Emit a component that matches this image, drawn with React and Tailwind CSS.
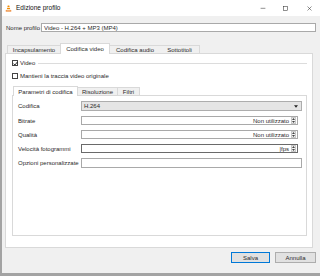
import React from "react";

function VlcIcon() {
  return (
    <svg width="7" height="7" viewBox="0 0 14 14">
      <path d="M5.5 1h3l1 4h-5z" fill="#f48b00" />
      <path d="M4.3 6h5.4l0.8 3.2h-7z" fill="#f48b00" />
      <path d="M1.5 10.5h11v2.5h-11z" fill="#e86a00" />
      <path d="M4.5 5h5l0.2 1h-5.4zM3.5 9.2h7l0.3 1.3h-7.6z" fill="#fff" />
    </svg>
  );
}

function Check({ checked }) {
  return (
    <div className="w-[6px] h-[6px] border border-[#444] bg-white flex items-center justify-center overflow-visible">
      {checked && (
        <svg width="5" height="5" viewBox="0 0 10 10" className="shrink-0">
          <path d="M1 5.2l2.8 2.8 5-6" stroke="#111" strokeWidth="1.8" fill="none" />
        </svg>
      )}
    </div>
  );
}

function Spinner() {
  return (
    <div className="w-[5px] h-[7px] border border-[#c8c8c8] bg-[#f4f4f4] flex flex-col items-center justify-around mr-[1px]">
      <svg width="3" height="2" viewBox="0 0 6 4"><path d="M3 0l3 4H0z" fill="#444" /></svg>
      <svg width="3" height="2" viewBox="0 0 6 4"><path d="M0 0h6L3 4z" fill="#444" /></svg>
    </div>
  );
}

function Row({ label, children, mt = "mt-[5px]" }) {
  return (
    <div className={`flex items-center ${mt}`}>
      <div className="w-[63px] shrink-0">{label}</div>
      {children}
    </div>
  );
}

function SpinField({ value, dark }) {
  return (
    <div className={`w-[217px] h-[9px] bg-white border ${dark ? "border-[#6a6a6a]" : "border-[#a9a9a9]"} flex items-center justify-end`}>
      <span className="mr-[2px]">{value}</span>
      <Spinner />
    </div>
  );
}

export default function App() {
  const outerTabs = ["Incapsulamento", "Codifica video", "Codifica audio", "Sottotitoli"];
  const outerW = ["w-[53px]", "w-[50px]", "w-[50px]", "w-[40px]"];
  const innerTabs = ["Parametri di codifica", "Risoluzione", "Filtri"];
  const innerW = ["w-[65px]", "w-[40px]", "w-[22px]"];

  return (
    <div className="w-[320px] h-[276px] bg-[#f0f0f0] flex flex-col border-l-2 border-b-[3px] border-[#a3a3a3] overflow-hidden text-[6px] leading-none text-[#2a2a2a] font-['Liberation_Sans',Arial,sans-serif]">
      {/* Title bar */}
      <div className="h-[16px] bg-white flex items-center shrink-0">
        <div className="ml-[3px]"><VlcIcon /></div>
        <span className="ml-[4px] text-[6.5px] text-[#111]">Edizione profilo</span>
        <div className="ml-auto flex items-center">
          <svg width="6" height="6" viewBox="0 0 10 10" className="mr-[17px]"><path d="M1 5.5h8" stroke="#333" strokeWidth="0.9" /></svg>
          <svg width="5" height="5" viewBox="0 0 10 10" className="mr-[19px]"><rect x="0.7" y="0.7" width="8.6" height="8.6" stroke="#333" strokeWidth="1.1" fill="none" /></svg>
          <svg width="5" height="5" viewBox="0 0 10 10" className="mr-[8px]"><path d="M1 1l8 8M9 1l-8 8" stroke="#333" strokeWidth="1.1" /></svg>
        </div>
      </div>

      {/* Profile name */}
      <div className="flex items-center mt-[7px] pl-[4px] pr-[4px]">
        <span className="w-[35px] shrink-0">Nome profilo</span>
        <div className="flex-1 h-[9px] bg-white border border-[#a9a9a9] flex items-center pl-[2px]">
          Video - H.264 + MP3 (MP4)
        </div>
      </div>

      {/* Outer tabs */}
      <div className="flex items-end h-[11px] mt-[11px] -mb-px pl-[5px] relative z-10">
        {outerTabs.map((t, i) =>
          i === 1 ? (
            <div key={t} className={`${outerW[i]} h-[11px] bg-white border-x border-t border-[#d9d9d9] flex items-center justify-center pb-[1px]`}>{t}</div>
          ) : (
            <div key={t} className={`${outerW[i]} h-[8px] mb-px bg-[#f0f0f0] border-t border-[#d9d9d9] ${i === 0 ? "border-l" : ""} ${i === 3 ? "border-r" : ""} flex items-center justify-center`}>{t}</div>
          )
        )}
      </div>

      {/* Outer panel */}
      <div className="ml-[3px] w-[308px] h-[195px] bg-white border border-[#d9d9d9] shrink-0 flex flex-col pl-[6px] pr-[5px]">
        <div className="flex items-center mt-[6px]">
          <Check checked />
          <span className="ml-[2px]">Video</span>
          <div className="flex-1 h-px bg-[#dcdcdc] ml-[3px]" />
        </div>
        <div className="flex items-center mt-[7px]">
          <Check />
          <span className="ml-[2px]">Mantieni la traccia video originale</span>
        </div>

        {/* Inner tabs */}
        <div className="flex items-end h-[10px] mt-[7px] -mb-px pl-px relative z-10">
          {innerTabs.map((t, i) =>
            i === 0 ? (
              <div key={t} className={`${innerW[i]} h-[10px] bg-white border-x border-t border-[#d9d9d9] flex items-center justify-center`}>{t}</div>
            ) : (
              <div key={t} className={`${innerW[i]} h-[8px] mb-px bg-[#f0f0f0] border-t border-r border-[#d9d9d9] flex items-center justify-center`}>{t}</div>
            )
          )}
        </div>

        {/* Inner panel */}
        <div className="h-[141px] border border-[#d9d9d9] bg-white pl-[5px] pr-[4px] flex flex-col">
          <Row label="Codifica" mt="mt-[5px]">
            <div className="flex-1 h-[10px] bg-[#e5e5e5] border border-[#adadad] flex items-center pl-[2px]">
              <span>H.264</span>
              <svg width="4" height="3" viewBox="0 0 8 5" className="ml-auto mr-[3px]"><path d="M0 0h8L4 5z" fill="#222" /></svg>
            </div>
          </Row>
          <Row label="Bitrate">
            <SpinField value="Non utilizzato" />
          </Row>
          <Row label="Qualità">
            <SpinField value="Non utilizzato" />
          </Row>
          <Row label="Velocità fotogrammi">
            <SpinField value="|fps" dark />
          </Row>
          <Row label="Opzioni personalizzate">
            <div className="flex-1 h-[10px] bg-white border border-[#a9a9a9]" />
          </Row>
        </div>
      </div>

      {/* Buttons */}
      <div className="flex justify-end gap-[5px] mt-[4px] pr-[4px]">
        <button className="w-[39px] h-[11px] bg-[#e1e1e1] border border-[#0078d7] text-[6px] leading-none">Salva</button>
        <button className="w-[41px] h-[11px] bg-[#e1e1e1] border border-[#adadad] text-[6px] leading-none">Annulla</button>
      </div>
    </div>
  );
}
